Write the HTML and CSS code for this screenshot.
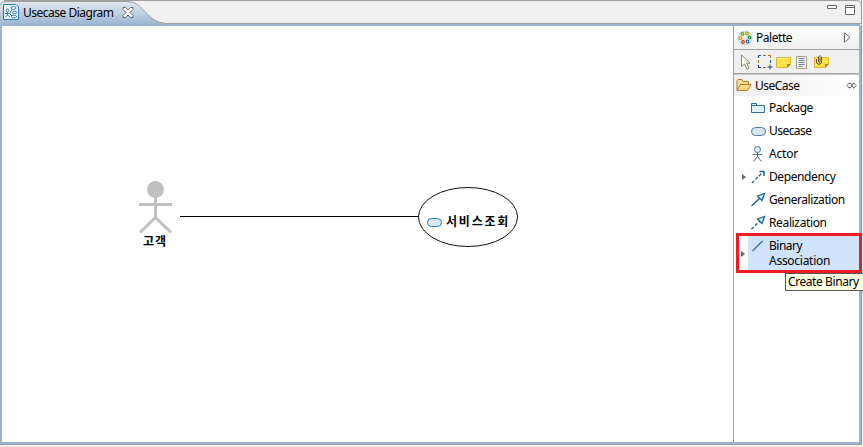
FILE: index.html
```html
<!DOCTYPE html>
<html lang="ko">
<head>
<meta charset="utf-8">
<title>Usecase Diagram</title>
<link rel="stylesheet" href="styles.css">
</head>
<body>
<div class="window">
  <header class="tabbar">
    <svg class="tab-shape" width="862" height="26" viewBox="0 0 862 26">
      <defs><linearGradient id="tab" x1="0" y1="0" x2="0" y2="1"><stop offset="0" stop-color="#e3e9f1"/><stop offset="1" stop-color="#99b4d1"/></linearGradient></defs>
      <path d="M0 0H858Q861.500 1 861.500 6V26H0Z" fill="#f0f0f0"/>
      <path d="M0 24H860V26H0Z" fill="#99b4d1"/>
      <path d="M0 25V5Q1 1.500 5 1.500H128C144 1.500 146 22.500 166 23.500V25Z" fill="url(#tab)"/>
      <path d="M.5 5Q1 1.500 5 1.500H128C144 1.500 146 22.500 166 23.500H861.500V6Q861 1 857 .5H4" fill="none" stroke="#a0a0a0"/>
    </svg>
    <div class="tab">
      <svg width="16" height="16" viewBox="0 0 16 16"><path d="M.5.5H13L15.500 3V15.500H.5Z" fill="#eaf5fc" stroke="#2878ae"/><g fill="none" stroke="#2878ae" stroke-width=".9"><circle cx="4.500" cy="6.500" r="1.500"/><path d="M4.500 8V11M2 9.500H7M2.500 13L4.500 11L7 13M7 9L9 5.500M7 10L9 12"/><ellipse cx="10.500" cy="4" rx="2.500" ry="1.500"/><ellipse cx="11.500" cy="8.500" rx="2.200" ry="1.300"/><ellipse cx="11" cy="12.500" rx="2.500" ry="1.300"/></g></svg>
      <span class="tab-name">Usecase Diagram</span>
      <svg class="close" width="12" height="11" viewBox="0 0 12 11"><path d="M1 .5H3.500L6 3L8.500.5H11V2.500L8 5.500L11 8.500V10.500H8.500L6 8L3.500 10.500H1V8.500L4 5.500L1 2.500Z" fill="#fff" stroke="#666"/></svg>
    </div>
    <svg class="controls" width="29" height="12" viewBox="0 0 29 12"><path d="M.5 1.500H9.500V4.500H.5ZM18.500 1.500H27.500V10.500H18.500ZM18.500 3.500H27.500" fill="#fff" stroke="#666"/></svg>
  </header>
  <div class="body">
    <main class="canvas">
      <svg class="drawing" width="731" height="416" viewBox="2 26 731 416">
        <path d="M180 216.500H419" stroke="#000"/>
        <circle cx="155.500" cy="189.500" r="8.500" fill="#c0c0c0"/>
        <path d="M155.500 197V219M139 204.500H172M155.500 217.500L140 232.500M155.500 217.500L171 232.500" stroke="#c0c0c0" stroke-width="3" fill="none"/>
        <ellipse cx="468" cy="217" rx="49.500" ry="29.500" fill="#fff" stroke="#111"/>
        <rect x="427.500" y="218.500" width="14" height="8" rx="4" fill="#d9e7f4" stroke="#2e7ab3"/>
      </svg>
      <span class="label actor">고객</span>
      <span class="label usecase">서비스조회</span>
    </main>
    <aside class="palette">
      <div class="head">
        <svg width="16" height="16" viewBox="0 0 16 16"><circle cx="8" cy="8" r="7" fill="#e5f0fa" stroke="#bdd2e6"/><g stroke-width="1.300" fill="#fff"><circle cx="5.500" cy="4" r="1.300" stroke="#71a50c"/><circle cx="10" cy="3.500" r="1.300" stroke="#a6aa00"/><circle cx="3.500" cy="8" r="1.400" stroke="#ee9500"/><circle cx="12.500" cy="7.500" r="1.300" stroke="#299440"/><circle cx="6" cy="12" r="1.300" stroke="#e12c16"/><circle cx="10.500" cy="11.500" r="1.300" stroke="#2476c5"/></g></svg>
        <span class="head-name">Palette</span>
        <svg class="expand" width="7" height="11" viewBox="0 0 7 11"><path d="M.5.8V10.200L6 5.500Z" fill="#fff" stroke="#666"/></svg>
      </div>
      <div class="tools">
        <svg width="16" height="16" viewBox="0 0 16 16"><path d="M3.500 1V12.500L6.500 10L9 15L11 14L8.700 9.200H12Z" fill="#fffef2" stroke="#878268"/></svg>
        <svg width="16" height="16" viewBox="0 0 16 16"><path d="M1.500 4V1.500H4M6 1.500H9M11 1.500H13.500V4M13.500 6V9M1.500 6V9M1.500 11V13.500H4M6 13.500H9" fill="none" stroke="#a36b20"/><path d="M1.500 4V1.500H4M13.500 6V9M1.500 11V13.500H4M13 10.500V15.500M10.500 13H15.500" fill="none" stroke="#254d87"/></svg>
        <svg width="16" height="16" viewBox="0 0 16 16"><path d="M.5 3.500H14.500V10L11 13.500H.5Z" fill="#ffe34b" stroke="#dfb72c"/><path d="M15 10H11V14Z" fill="#b78625"/><path d="M1 4.500H14" stroke="#fff49c"/></svg>
        <svg width="16" height="16" viewBox="0 0 16 16"><path d="M1.500 2.500H11.500V14.500H1.500Z" fill="#edf5ff" stroke="#aaa27c"/><path d="M3.500 4.500H9.500M3.500 6.500H9.500M3.500 8.500H9.500M3.500 10.500H9.500M3.500 12.500H7.500" stroke="#6683ae"/></svg>
        <svg width="17" height="16" viewBox="0 0 17 16"><path d="M.5 3.500H14.500V10L11 13.500H.5Z" fill="#ffe34b" stroke="#dfb72c"/><path d="M15 10H11V14Z" fill="#b78625"/><path d="M2.500 5V9Q5 12 7.500 9V3Q6 0 4.500 3V8Q5.500 9.500 6 8V4" fill="none" stroke="#66532c"/></svg>
      </div>
      <section class="drawer">
        <div class="drawer-head">
          <svg width="16" height="14" viewBox="0 0 16 14"><path d="M1 12V2.500L2 1.500H6L7 3.500H12.500V6" fill="#f9df9e" stroke="#b17d22"/><path d="M1 12.500L4.500 6.500H15L11.500 12.500Z" fill="#ffd982" stroke="#b17d22"/></svg>
          <span class="drawer-name">UseCase</span>
          <svg class="pin" width="11" height="7" viewBox="0 0 11 7"><path d="M3.500.5L.8 3.500L3.500 6.500M3 1.500H5L7 5.500H8M3 5.500H5L7 1.500H8M7.500.5L10.200 3.500L7.500 6.500" fill="none" stroke="#777"/></svg>
        </div>
        <div class="item"><i></i><svg width="16" height="16" viewBox="0 0 16 16"><path d="M1.500 3.500H6.500V5.500H14.500V12.500H1.500Z" fill="#e0f0fb" stroke="#2d709f"/><path d="M1.500 5.500H7" stroke="#2d709f"/></svg><span class="w-package">Package</span></div>
        <div class="item"><i></i><svg width="16" height="16" viewBox="0 0 16 16"><rect x="1.500" y="4.500" width="14" height="8" rx="4" fill="#d9e7f4" stroke="#56799e"/></svg><span class="w-usecase">Usecase</span></div>
        <div class="item"><i></i><svg width="16" height="16" viewBox="0 0 16 16"><path d="M7.500 6V11M2.500 8.500H12.500M7.500 10.500L3.500 15.500M7.500 10.500L11.500 15.500" fill="none" stroke="#426fa6"/><circle cx="7.500" cy="3.500" r="3" fill="#e6f2fb" stroke="#426fa6"/></svg><span class="w-actor">Actor</span></div>
        <div class="item"><i class="arrow"></i><svg width="16" height="16" viewBox="0 0 16 16"><path d="M2 14L12 4" stroke="#246191" stroke-width="1.400" stroke-dasharray="3 2"/><path d="M9.500 2.500H14V7" fill="none" stroke="#246191" stroke-width="1.500"/></svg><span class="w-dependency">Dependency</span></div>
        <div class="item"><i></i><svg width="16" height="16" viewBox="0 0 16 16"><path d="M1.500 14L10 6" stroke="#246191" stroke-width="1.500"/><path d="M7.500 4L14.500 1.500L12 8.500Z" fill="#d5edf8" stroke="#246191" stroke-width="1.300"/></svg><span class="w-generalization">Generalization</span></div>
        <div class="item"><i></i><svg width="16" height="16" viewBox="0 0 16 16"><path d="M1.500 14L10 6" stroke="#246191" stroke-width="1.500" stroke-dasharray="3 2"/><path d="M7.500 4L14.500 1.500L12 8.500Z" fill="#d5edf8" stroke="#246191" stroke-width="1.300"/></svg><span class="w-realization">Realization</span></div>
        <div class="item selected"><i class="arrow"></i><div class="selection"><svg width="16" height="16" viewBox="0 0 16 16"><path d="M2.500 13L12.500 3" stroke="#397196" stroke-width="1.200"/></svg><div class="lines"><span class="w-binary">Binary</span><span class="w-association">Association</span></div></div></div>
      </section>
    </aside>
  </div>
  <div class="tooltip"><span class="tooltip-text">Create Binary</span></div>
</div>
</body>
</html>
```
FILE: styles.css
```css
* { box-sizing: border-box; }
body { margin: 0; background: #f0f0f0; color: #000; font: 12px/15px "Noto Sans", "Noto Sans CJK KR", sans-serif; overflow: hidden; }
svg { display: block; flex: none; }
.window { position: relative; width: 862px; height: 445px; border: solid #a0a0a0; border-width: 0 1px 1px 0; display: flex; flex-direction: column; }
.tabbar { position: relative; height: 26px; flex: none; display: flex; justify-content: space-between; align-items: flex-start; }
.tab-shape { position: absolute; left: 0; top: 0; }
.tab { position: relative; display: flex; align-items: center; height: 24px; padding-left: 3px; }
.tab-name { margin-left: 4px; margin-top: 1px; width: 99px; letter-spacing: -.5px; white-space: nowrap; }
.close { margin-left: 0; }
.controls { position: relative; margin: 4px 5px 0 0; }
.body { flex: 1; display: flex; border: solid #99b4d1; border-width: 0 2px 2px; background: #fff; }
.canvas { position: relative; flex: 1; }
.drawing { position: absolute; left: 0; top: 0; }
.label { position: absolute; font: bold 12px/15px "Noto Sans CJK KR", sans-serif; white-space: nowrap; }
.actor { left: 141px; top: 207px; letter-spacing: 1px; }
.usecase { left: 444px; top: 187px; letter-spacing: 1.800px; }
.palette { width: 126px; border-left: 1px solid #a0a0a0; }
.head { height: 24px; display: flex; align-items: center; padding: 0 8px 0 3px; border-bottom: 1px solid #a0a0a0; background: linear-gradient(#fff, #f0f0f0); }
.head-name { margin-left: 3px; letter-spacing: -.45px; }
.expand, .pin { margin-left: auto; }
.tools { height: 24px; display: flex; align-items: center; gap: 3px; padding: 0 4px; background: #f0f0f0; border-bottom: 1px solid #a0a0a0; }
.drawer-head { height: 22px; display: flex; align-items: center; padding: 0 2px 1px; background: linear-gradient(90deg, #f0f0f0, #fff); border-top: 1px solid #ccc; }
.drawer-name { margin-left: 3px; letter-spacing: -.5px; }
.item { height: 23px; display: flex; align-items: center; white-space: nowrap; }
.item i { width: 16px; height: 7px; flex: none; }
.item > span { margin-left: 3px; }
.w-package { letter-spacing: -.45px; }
.w-usecase { letter-spacing: -.55px; }
.w-actor { letter-spacing: -.2px; }
.w-dependency { letter-spacing: -.4px; }
.w-generalization { letter-spacing: -.43px; }
.w-realization { letter-spacing: -.36px; }
.w-binary { letter-spacing: -.5px; }
.w-association { letter-spacing: -.27px; }
.arrow::before { content: ""; display: block; margin: 1px 0 0 8px; width: 0; border: solid transparent; border-width: 3px 0 3px 4px; border-left-color: #666; }
.selected { position: relative; top: -1px; width: 126px; height: 40px; margin-left: 2px; border: 3px solid #ed1c24; }
.selected i { width: 9px; }
.selected .arrow::before { margin-left: 2px; }
.selection { flex: 1; height: 34px; display: flex; align-items: flex-start; background: #cfe3fa; padding: 2px 0 0 2px; }
.lines { margin-left: 3px; }
.lines span { display: block; height: 15px; line-height: 15px; }
.tooltip { position: absolute; left: 785px; top: 273px; width: 78px; height: 18px; padding: 0 0 0 2px; background: #ffffe1; border: 1px solid #555; border-right: 0; white-space: nowrap; letter-spacing: -.42px; }
```
